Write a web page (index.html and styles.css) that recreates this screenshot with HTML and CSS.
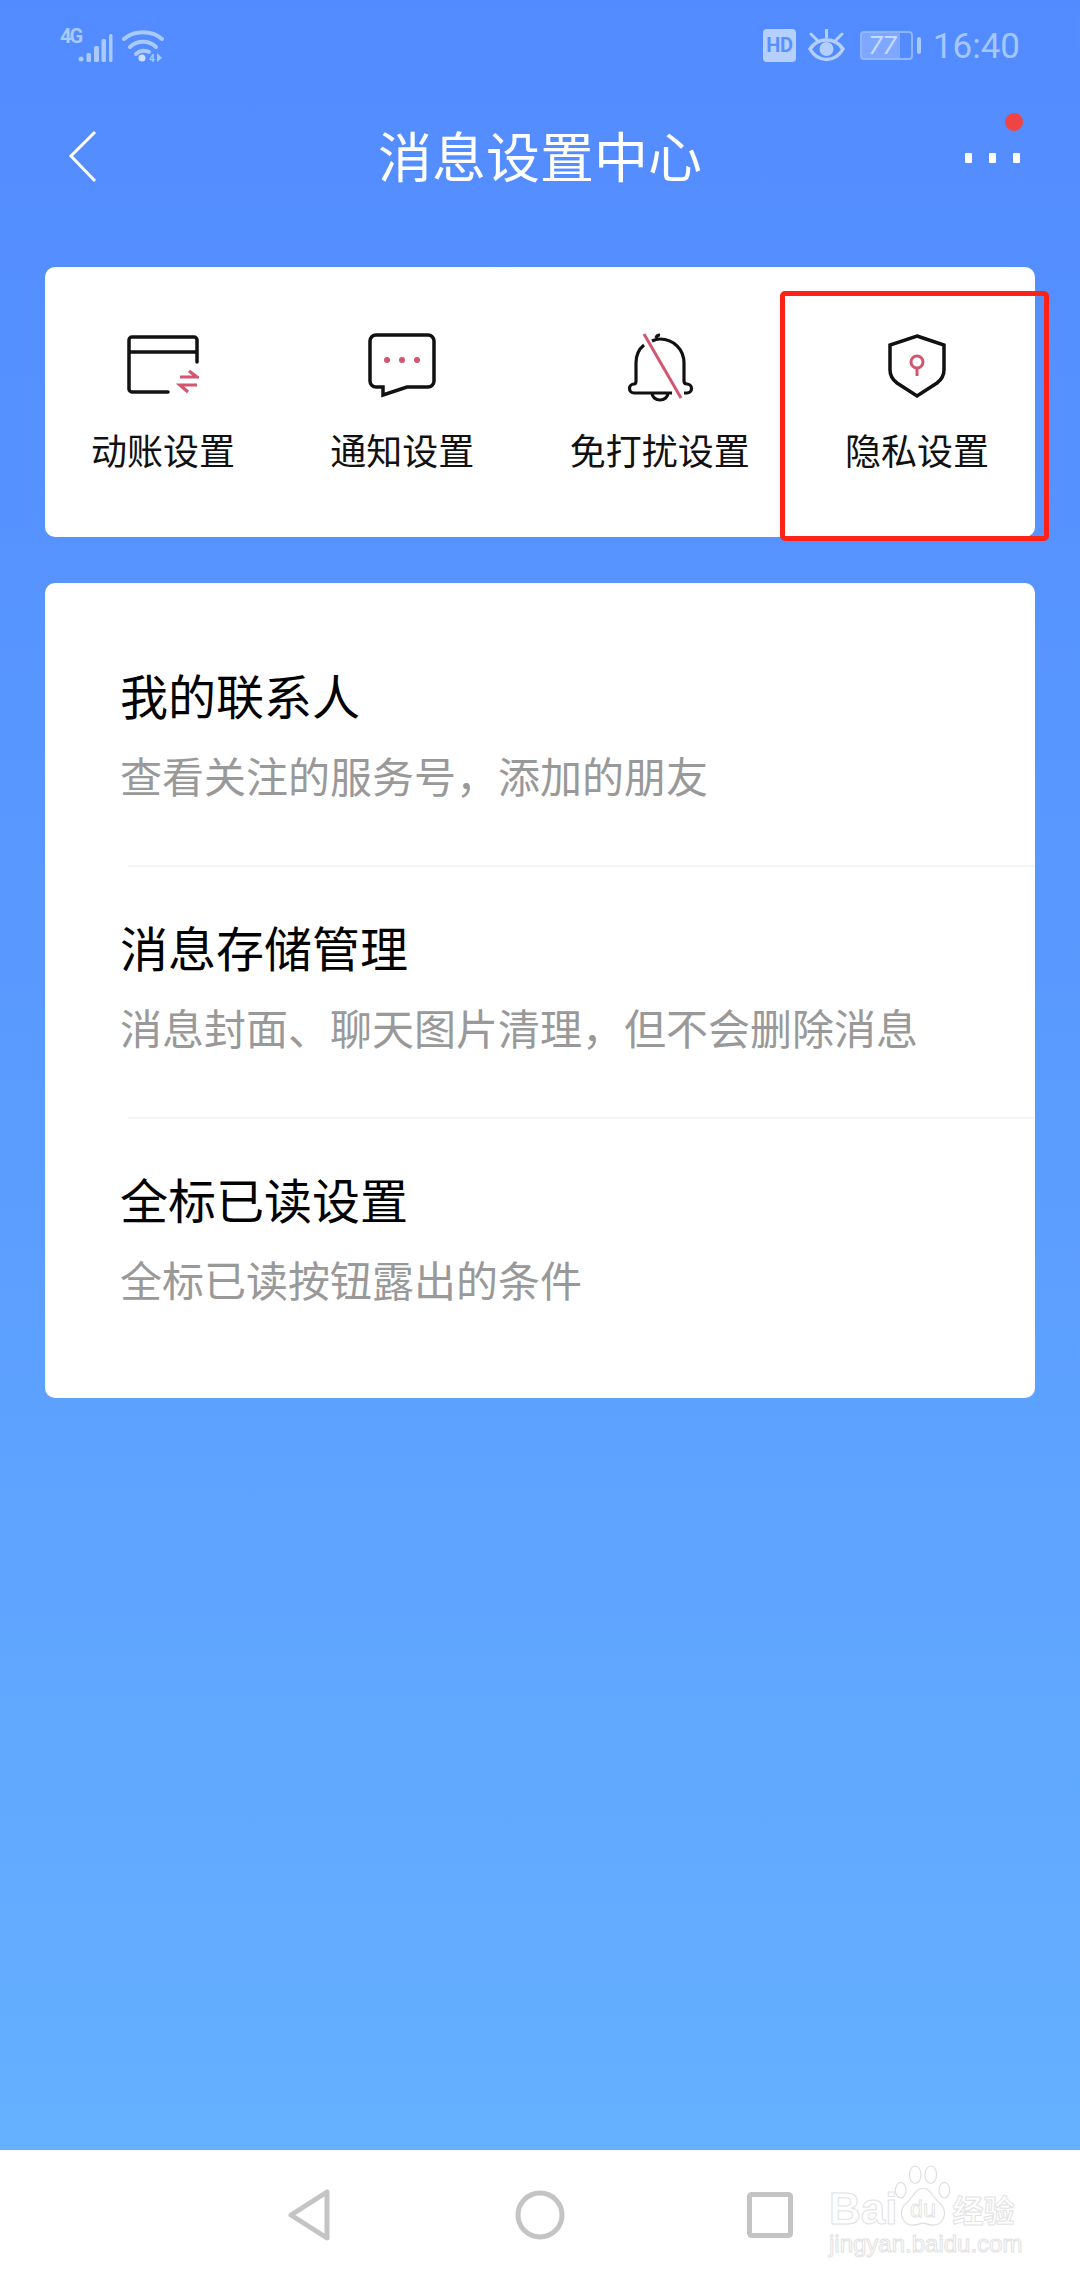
FILE: index.html
```html
<!DOCTYPE html>
<html lang="zh-CN">
<head>
    <meta charset="UTF-8">
    <meta name="viewport" content="width=device-width, initial-scale=1.0">
    <title>消息设置中心</title>
    <link rel="stylesheet" href="styles.css">
</head>
<body>
    <div class="screen">
        <div class="main">
            <!-- 状态栏 -->
            <div class="status">
                <div class="status-left">
                    <span class="net">4G</span>
                    <svg class="signal" width="36" height="36" viewBox="0 0 36 36">
                        <circle cx="3" cy="31" r="2.5" fill="#a9c9ff"/>
                        <rect x="8.5" y="25" width="4.5" height="9" rx="1.5" fill="#a9c9ff"/>
                        <rect x="16" y="18" width="5" height="16" rx="1.5" fill="#a9c9ff"/>
                        <rect x="23.5" y="11" width="4.5" height="23" rx="1.5" fill="#a9c9ff"/>
                        <rect x="31" y="6" width="3.5" height="28" rx="1.5" fill="#a9c9ff"/>
                    </svg>
                    <svg class="wifi" width="42" height="38" viewBox="0 0 42 38">
                        <path d="M2 11C12 2 30 2 40 11" fill="none" stroke="#a9c9ff" stroke-width="4" stroke-linecap="round"/>
                        <path d="M8 19C15 12 27 12 34 19" fill="none" stroke="#a9c9ff" stroke-width="4" stroke-linecap="round"/>
                        <path d="M14 26C18 22 24 22 27 24" fill="none" stroke="#a9c9ff" stroke-width="4" stroke-linecap="round"/>
                        <circle cx="20" cy="30" r="3.5" fill="#cfe0ff"/>
                        <text x="27" y="34" class="wifi-4">4</text>
                        <path d="M35 25L40 30L35 34Z" fill="#a9c9ff"/>
                    </svg>
                </div>
                <div class="status-right">
                    <span class="hd">HD</span>
                    <svg class="eye" width="37" height="33" viewBox="0 0 37 33">
                        <path d="M2 20C10 8 27 8 35 20C27 34 10 34 2 20Z" fill="none" stroke="#b3cfff" stroke-width="3.5"/>
                        <circle cx="18.5" cy="20" r="7" fill="#b3cfff"/>
                        <path d="M18.5 1V8M3 5L9 11M34 5L28 11" stroke="#b3cfff" stroke-width="3" stroke-linecap="round"/>
                    </svg>
                    <div class="battery"><span>77</span></div>
                    <i class="battery-nub"></i>
                    <span class="time">16:40</span>
                </div>
            </div>

            <!-- 标题 -->
            <div class="header">
                <svg class="back" width="46" height="56" viewBox="0 0 46 56">
                    <path d="M35 3L11 27L35 52" fill="none" stroke="#fff" stroke-width="3"/>
                </svg>
                <h1>消息设置中心</h1>
                <div class="more">
                    <i></i><i></i><i></i>
                    <b class="dot"></b>
                </div>
            </div>

            <div class="card tabs">
                <div class="tab">
                    <svg width="72" height="72" viewBox="0 0 72 72">
                        <path d="M41 62H5a3 3 0 0 1-3-3V10a3 3 0 0 1 3-3H67a3 3 0 0 1 3 3V32M2 22H70" fill="none" stroke="#111" stroke-width="3.5" stroke-linecap="round"/>
                        <path d="M53 47H70L62 41M70 55H53L61 62" fill="none" stroke="#d2566f" stroke-width="3.2"/>
                    </svg>
                    <span>动账设置</span>
                </div>
                <div class="tab">
                    <svg width="72" height="72" viewBox="0 0 72 72">
                        <path d="M10 5H62a6 6 0 0 1 6 6V51a6 6 0 0 1-6 6H41L17 65V57H10a6 6 0 0 1-6-6V11a6 6 0 0 1 6-6Z" fill="none" stroke="#111" stroke-width="3.5"/>
                        <circle cx="21" cy="30" r="3" fill="#d2566f"/>
                        <circle cx="36" cy="30" r="3" fill="#d2566f"/>
                        <circle cx="51" cy="30" r="3" fill="#d2566f"/>
                    </svg>
                    <span>通知设置</span>
                </div>
                <div class="tab">
                    <svg width="72" height="72" viewBox="0 0 72 72">
                        <path d="M20 15C15 19 12 25 12 33V51Q12 54 10 54a4.500 4.500 0 0 0 0 9H48M60 63H63a4.500 4.500 0 0 0 0-9Q60 54 60 51V33C60 20 50 9 36 9C33 9 31 9.500 28 11M32 8a4 4 0 0 1 4-3M28 63a8 7 0 0 0 16 0" fill="none" stroke="#111" stroke-width="3.200"/>
                        <path d="M20 4L57 68" stroke="#d2566f" stroke-width="3"/>
                    </svg>
                    <span>免打扰设置</span>
                </div>
                <div class="tab">
                    <svg width="72" height="72" viewBox="0 0 72 72">
                        <path d="M36 6L63 15V40C63 46 60 50 56 53L36 66L16 53C12 50 9 46 9 40V15Z" fill="none" stroke="#111" stroke-width="3.500"/>
                        <circle cx="36" cy="32" r="6" fill="none" stroke="#d2566f" stroke-width="3"/>
                        <path d="M36 38V46" stroke="#d2566f" stroke-width="3"/>
                    </svg>
                    <span>隐私设置</span>
                </div>
                <!-- 截图上的红框 -->
                <div class="mark"></div>
            </div>

            <div class="card list">
                <div class="row">
                    <div class="row-title">我的联系人</div>
                    <div class="row-sub">查看关注的服务号，添加的朋友</div>
                </div>
                <div class="row">
                    <div class="row-title">消息存储管理</div>
                    <div class="row-sub">消息封面、聊天图片清理，但不会删除消息</div>
                </div>
                <div class="row">
                    <div class="row-title">全标已读设置</div>
                    <div class="row-sub">全标已读按钮露出的条件</div>
                </div>
            </div>
        </div>

        <!-- 底部导航 -->
        <div class="nav">
            <svg width="60" height="60" viewBox="0 0 60 60">
                <path d="M47 7V53L11 30Z" fill="none" stroke="#c4c4c4" stroke-width="5" stroke-linejoin="round"/>
            </svg>
            <svg width="60" height="60" viewBox="0 0 60 60">
                <circle cx="30" cy="30" r="22" fill="none" stroke="#c4c4c4" stroke-width="5"/>
            </svg>
            <svg width="60" height="60" viewBox="0 0 60 60">
                <rect x="9.5" y="9.5" width="41" height="41" rx="2" fill="none" stroke="#c4c4c4" stroke-width="5"/>
            </svg>
            <div class="watermark">
                <div class="wm-top">
                    <span>Bai</span>
                    <svg width="60" height="62" viewBox="0 0 60 64">
                        <g fill="none" stroke="#dedede" stroke-width="1.2">
                            <ellipse cx="7" cy="26" rx="5.5" ry="8"/>
                            <ellipse cx="22" cy="10" rx="6" ry="9"/>
                            <ellipse cx="38" cy="10" rx="6" ry="9"/>
                            <ellipse cx="52" cy="26" rx="5.5" ry="8"/>
                            <path d="M30 24C22 24 20 34 12 40C4 48 8 62 20 62C25 62 27 60 30 60C33 60 35 62 40 62C52 62 56 48 48 40C40 34 38 24 30 24Z"/>
                        </g>
                        <text x="30" y="54" text-anchor="middle" class="wm-du">du</text>
                    </svg>
                    <span class="wm-cn">经验</span>
                </div>
                <div class="wm-url">jingyan.baidu.com</div>
            </div>
        </div>
    </div>
</body>
</html>
```

FILE: styles.css
```css
*{
    margin: 0;
    padding: 0;
    box-sizing: border-box;
}
body{
    font-family: "Noto Sans CJK SC", "Liberation Sans", sans-serif;
}
.screen{
    width: 1080px;
    height: 2280px;
    display: flex;
    flex-direction: column;
    overflow: hidden;
}
.main{
    flex: 1;
    padding-bottom: 1px;
    background: linear-gradient(180deg, #528bff 0%, #5a9bff 50%, #65b0ff 100%);
}

/* 状态栏 */
.status{
    height: 114px;
    padding: 28px 60px 0;
    display: flex;
    justify-content: space-between;
    align-items: flex-start;
}
.status-left{
    display: flex;
    align-items: flex-start;
}
.net{
    width: 18px;
    font: bold 20px/16px "Roboto", sans-serif;
    letter-spacing: -2px;
    color: #a9c9ff;
}
.signal{
    margin-right: 8px;
}
.wifi-4{
    font: bold 10px "Roboto", sans-serif;
    fill: #a9c9ff;
}
.status-right{
    display: flex;
    align-items: center;
    height: 34px;
}
.hd{
    width: 33px;
    height: 33px;
    margin-right: 12px;
    border-radius: 4px;
    background-color: #b5d0ff;
    color: #5a8fff;
    font: bold 20px/33px "Roboto", sans-serif;
    text-align: center;
    letter-spacing: -0.5px;
}
.eye{
    margin-right: 15px;
}
.battery{
    width: 53px;
    height: 29px;
    border: 2px solid #8fb6ff;
    border-radius: 4px;
    background: linear-gradient(90deg, #7ea8ff 0, #7ea8ff 78%, transparent 78%);
    color: #c9dcff;
    font: italic 26px/25px "Roboto", sans-serif;
    text-align: center;
}
.battery span{
    display: block;
    margin-right: 8px;
}
.battery-nub{
    width: 4px;
    height: 17px;
    margin: 0 12px 0 4px;
    border-radius: 2px;
    background-color: #a9c9ff;
}
.time{
    margin-top: 3px;
    font: 35px/34px "Roboto", sans-serif;
    color: #a6c6ff;
}

/* 标题 */
.header{
    height: 88px;
    padding: 0 60px;
    display: grid;
    grid-template-columns: 1fr auto 1fr;
    align-items: center;
}
.back{
    display: block;
    margin-bottom: 3px;
}
.header h1{
    padding-bottom: 7px;
    font-size: 54px;
    line-height: 60px;
    font-weight: 400;
    color: #fff;
}
.more{
    justify-self: end;
    position: relative;
    display: flex;
    gap: 17px;
}
.more i{
    width: 7px;
    height: 10px;
    border-radius: 1px;
    background-color: #fff;
}
.more .dot{
    width: 18px;
    height: 18px;
    border-radius: 50%;
    background-color: #ef4444;
    position: absolute;
    top: -40px;
    right: -3px;
}

/* 卡片 */
.card{
    width: 990px;
    margin: 0 auto;
    border-radius: 10px;
    background-color: #fff;
}
.tabs{
    height: 270px;
    margin-top: 65px;
    padding: 63px 46px 0;
    display: flex;
    justify-content: space-between;
    position: relative;
}
.tab{
    display: flex;
    flex-direction: column;
    align-items: center;
}
.tab span{
    margin-top: 30px;
    font-size: 36px;
    line-height: 35px;
    color: #111;
}
.mark{
    width: 269px;
    height: 250px;
    border: 5px solid #ff2216;
    border-radius: 5px;
    position: absolute;
    top: 24px;
    left: 735px;
}
.list{
    margin-top: 46px;
    padding: 32px 0 27px 83px;
}
.row{
    height: 252px;
    padding-top: 49px;
    border-bottom: 2px solid #f4f5f7;
}
.row:last-child{
    border-bottom: none;
}
.row-title{
    margin-left: -8px;
    font-size: 48px;
    line-height: 60px;
    color: #000;
}
.row-sub{
    margin: 26px 0 0 -8px;
    font-size: 42px;
    line-height: 50px;
    color: #999;
}

/* 底部导航 */
.nav{
    height: 130px;
    display: flex;
    justify-content: center;
    align-items: center;
    gap: 170px;
    background-color: #fff;
    position: relative;
}
.watermark{
    width: 192px;
    position: absolute;
    top: 15px;
    left: 829px;
    color: transparent;
    -webkit-text-stroke: 1px #e2e2e2;
}
.wm-top{
    display: flex;
    align-items: flex-end;
    height: 62px;
    font: bold 44px/36px "Liberation Sans", sans-serif;
}
.wm-top svg{
    flex: none;
    margin: 0 -1px 0 -4px;
}
.wm-du{
    font: 24px "Liberation Sans", sans-serif;
    fill: none;
    stroke: #dedede;
    stroke-width: 0.8;
}
.wm-cn{
    font: bold 31px/36px "Noto Sans CJK SC", sans-serif;
}
.wm-url{
    margin-top: 4px;
    font: 24px/26px "Liberation Sans", sans-serif;
    white-space: nowrap;
}
```
